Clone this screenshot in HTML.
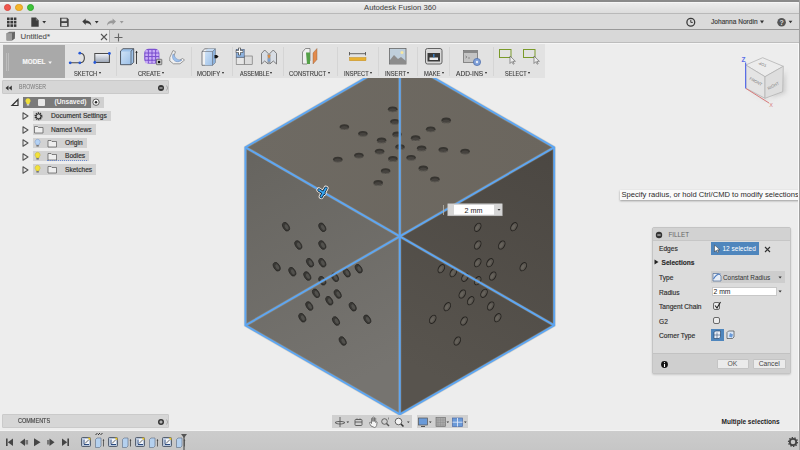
<!DOCTYPE html>
<html><head><meta charset="utf-8">
<style>
*{margin:0;padding:0;box-sizing:border-box}
html,body{width:800px;height:450px;overflow:hidden;background:#a0a0a0}
body{position:relative;font-family:"Liberation Sans",sans-serif;color:#333}
.a{position:absolute}
.t{position:absolute;white-space:nowrap;line-height:1}
#win{position:absolute;left:0;top:0;width:799px;height:450px;background:#ededed;overflow:hidden}
#title{left:0;top:1.5px;width:799px;height:11.5px;background:linear-gradient(#ececec,#dcdcdc);border-top:0.5px solid #f6f6f6;border-radius:3px 3px 0 0}
#topstrip{left:0;top:0;width:800px;height:2px;background:#8a8a8a}
#tb{left:0;top:13px;width:799px;height:17px;background:#dadada;border-top:1px solid #b9b9b9;border-bottom:1px solid #999}
#tabs{left:0;top:30px;width:799px;height:13px;background:#d8d8d8;border-bottom:1px solid #bdbdbd;box-shadow:0 1px 0 #f6f6f6}
#tab1{left:0;top:0;width:110px;height:12px;background:#ebebeb;border-right:1px solid #b0b0b0}
#ribbon{left:3px;top:44px;width:542px;height:34px;background:#e2e2e2}
#model{left:3px;top:45px;width:62px;height:33px;background:#a9a9a9}
.sep{position:absolute;top:47px;width:1px;height:29px;background:#d5d5d5}
.lbl{position:absolute;top:69.7px;font-size:6.4px;color:#3e3e3e;white-space:nowrap;line-height:8px;-webkit-text-stroke:0.12px #3e3e3e}
.lbl span{display:inline-block;transform-origin:0 0}
.dd{position:absolute;top:71.6px;width:0;height:0;border-left:1.6px solid transparent;border-right:1.6px solid transparent;border-top:2.4px solid #222}
.panel{position:absolute;left:2px;width:167px;height:14px;background:#d6d6d6;border:1px solid #cacaca;border-radius:1px}
.row{position:absolute;height:11px;background:#d2d2d2}
.rt{position:absolute;top:1.5px;font-size:6.6px;color:#2e2e2e;white-space:nowrap;line-height:8px;-webkit-text-stroke:0.15px #2e2e2e}
.tri{position:absolute;width:0;height:0;border-top:3px solid transparent;border-bottom:3px solid transparent;border-left:5px solid #444}
#timeline{left:0;top:431px;width:799px;height:19px;background:linear-gradient(#cccccc,#c6c6c6);box-shadow:0 -1px 0 #f3f3f3}
.navg{position:absolute;top:415px;height:13px;background:#d0d0d0}
#dlg{left:652px;top:227px;width:139px;height:147px;background:#dcdcdc;border:1px solid #c4c4c4;border-radius:2px;box-shadow:0 1px 2px rgba(0,0,0,.15)}
.dl{position:absolute;left:6px;font-size:6.6px;color:#2e2e2e;white-space:nowrap;line-height:8px;-webkit-text-stroke:0.15px #2e2e2e}
</style></head><body>
<div id="win">
  <div id="topstrip" class="a"></div>
  <div id="title" class="a">
    <div class="a" style="left:4px;top:1.7px;width:7.2px;height:7.2px;border-radius:50%;background:#f0564c;border:0.5px solid #d84840"></div>
    <div class="a" style="left:15.4px;top:1.7px;width:7.2px;height:7.2px;border-radius:50%;background:#f6b52a;border:0.5px solid #dc9e22"></div>
    <div class="a" style="left:26.6px;top:1.7px;width:7.2px;height:7.2px;border-radius:50%;background:#3ec43a;border:0.5px solid #30a82e"></div>
    <div class="t" style="left:364px;top:1.5px;font-size:7.7px;color:#3e3e3e">Autodesk Fusion 360</div>
  </div>
  <!-- cube -->
  <svg class="a" style="left:0;top:0" width="800" height="450" viewBox="0 0 800 450">
    <defs>
      <linearGradient id="fl" x1="0" y1="0" x2="0.3" y2="1"><stop offset="0" stop-color="#66645f"/><stop offset="1" stop-color="#767470"/></linearGradient>
      <linearGradient id="fr" x1="1" y1="0" x2="0.7" y2="1"><stop offset="0" stop-color="#4b4742"/><stop offset="1" stop-color="#58544e"/></linearGradient>
      <linearGradient id="ft" x1="0" y1="0" x2="1" y2="0"><stop offset="0" stop-color="#6e6a63"/><stop offset="1" stop-color="#6b665e"/></linearGradient>
      <g id="ht"><ellipse rx="4.8" ry="2.9" fill="#363430"/><ellipse cy="0.7" rx="3.4" ry="1.7" fill="#46433f"/><path d="M-4.4 0.9a4.8 2.9 0 0 0 8.8 0" fill="none" stroke="#7e7a72" stroke-width="0.5"/></g>
      <g id="hl"><ellipse rx="2.9" ry="4.7" fill="#3a3936" stroke="#262523" stroke-width="0.7"/><ellipse cx="0.4" cy="0.5" rx="1.6" ry="2.8" fill="#52514d"/></g>
      <g id="hr"><ellipse rx="2.8" ry="4.5" fill="#5a5650" stroke="#23211e" stroke-width="0.9"/><ellipse cx="-0.3" cy="0.5" rx="1.4" ry="2.6" fill="#66625b"/></g>
    </defs>
    <path d="M399.8 58.2L554.2 147.3 399.8 236.4 245.4 147.3z" fill="url(#ft)"/>
    <path d="M245.4 147.3L399.8 236.4 399.8 414.4 245.4 325.4z" fill="url(#fl)"/>
    <path d="M399.8 236.4L554.2 147.3 554.2 325.4 399.8 414.4z" fill="url(#fr)"/>
    <use href="#ht" x="392.7" y="109.3"/>
    <use href="#ht" x="394.9" y="121.8"/>
    <use href="#ht" x="397.1" y="134.4"/>
    <use href="#ht" x="400" y="147.1"/>
    <use href="#ht" x="344.4" y="127.1"/>
    <use href="#ht" x="362.9" y="133.8"/>
    <use href="#ht" x="381.6" y="140.4"/>
    <use href="#ht" x="337.8" y="159.6"/>
    <use href="#ht" x="358.9" y="155.6"/>
    <use href="#ht" x="379.6" y="151.6"/>
    <use href="#ht" x="392.9" y="158.9"/>
    <use href="#ht" x="385.6" y="171.1"/>
    <use href="#ht" x="378.2" y="182.9"/>
    <use href="#ht" x="411.1" y="157.8"/>
    <use href="#ht" x="423.3" y="168.4"/>
    <use href="#ht" x="434.9" y="179.3"/>
    <use href="#ht" x="421.6" y="148.4"/>
    <use href="#ht" x="443.3" y="149.8"/>
    <use href="#ht" x="465.1" y="151.6"/>
    <use href="#ht" x="415.6" y="138.2"/>
    <use href="#ht" x="430.7" y="129.3"/>
    <use href="#ht" x="446.2" y="120.4"/>
    <use href="#hl" transform="translate(286 226.7) rotate(-30)"/>
    <use href="#hl" transform="translate(322.3 227.3) rotate(-30)"/>
    <use href="#hl" transform="translate(298.3 245) rotate(-30)"/>
    <use href="#hl" transform="translate(322.3 245) rotate(-30)"/>
    <use href="#hl" transform="translate(276.7 266.7) rotate(-30)"/>
    <use href="#hl" transform="translate(292.3 271.7) rotate(-30)"/>
    <use href="#hl" transform="translate(310 262.7) rotate(-30)"/>
    <use href="#hl" transform="translate(322.3 262.7) rotate(-30)"/>
    <use href="#hl" transform="translate(307.3 276) rotate(-30)"/>
    <use href="#hl" transform="translate(322.3 280.7) rotate(-30)"/>
    <use href="#hl" transform="translate(335 277.3) rotate(-30)"/>
    <use href="#hl" transform="translate(346.7 272.7) rotate(-30)"/>
    <use href="#hl" transform="translate(358.7 268.7) rotate(-30)"/>
    <use href="#hl" transform="translate(316 293.3) rotate(-30)"/>
    <use href="#hl" transform="translate(337.7 294) rotate(-30)"/>
    <use href="#hl" transform="translate(329.3 300.7) rotate(-30)"/>
    <use href="#hl" transform="translate(309.3 306) rotate(-30)"/>
    <use href="#hl" transform="translate(352.7 306.7) rotate(-30)"/>
    <use href="#hl" transform="translate(302.3 317.7) rotate(-30)"/>
    <use href="#hl" transform="translate(336 321) rotate(-30)"/>
    <use href="#hl" transform="translate(367.3 319.3) rotate(-30)"/>
    <use href="#hl" transform="translate(342.7 341) rotate(-30)"/>
    <use href="#hr" transform="translate(514.0 226.7) rotate(30)"/>
    <use href="#hr" transform="translate(477.7 227.3) rotate(30)"/>
    <use href="#hr" transform="translate(501.7 245) rotate(30)"/>
    <use href="#hr" transform="translate(477.7 245) rotate(30)"/>
    <use href="#hr" transform="translate(523.3 266.7) rotate(30)"/>
    <use href="#hr" transform="translate(490.0 262.7) rotate(30)"/>
    <use href="#hr" transform="translate(477.7 262.7) rotate(30)"/>
    <use href="#hr" transform="translate(492.7 276) rotate(30)"/>
    <use href="#hr" transform="translate(477.7 280.7) rotate(30)"/>
    <use href="#hr" transform="translate(465.0 277.3) rotate(30)"/>
    <use href="#hr" transform="translate(453.3 272.7) rotate(30)"/>
    <use href="#hr" transform="translate(441.3 268.7) rotate(30)"/>
    <use href="#hr" transform="translate(484.0 293.3) rotate(30)"/>
    <use href="#hr" transform="translate(462.3 294) rotate(30)"/>
    <use href="#hr" transform="translate(470.7 300.7) rotate(30)"/>
    <use href="#hr" transform="translate(490.7 306) rotate(30)"/>
    <use href="#hr" transform="translate(447.3 306.7) rotate(30)"/>
    <use href="#hr" transform="translate(497.7 317.7) rotate(30)"/>
    <use href="#hr" transform="translate(464.0 321) rotate(30)"/>
    <use href="#hr" transform="translate(432.7 319.3) rotate(30)"/>
    <use href="#hr" transform="translate(457.3 341) rotate(30)"/>
    <g fill="none" stroke="#bba88a" stroke-width="3.2" stroke-opacity="0.35" stroke-linejoin="round">
      <path d="M399.8 58.2L554.2 147.3 554.2 325.4 399.8 414.4 245.4 325.4 245.4 147.3z M245.4 147.3L399.8 236.4 554.2 147.3 M399.8 236.4V414.4 M399.8 58.2V236.4 M245.4 325.4L399.8 236.4 554.2 325.4"/>
    </g>
    <g fill="none" stroke="#5ea6f2" stroke-width="2" stroke-linejoin="round">
      <path d="M399.8 58.2L554.2 147.3 554.2 325.4 399.8 414.4 245.4 325.4 245.4 147.3z M245.4 147.3L399.8 236.4 554.2 147.3 M399.8 236.4V414.4 M399.8 58.2V236.4 M245.4 325.4L399.8 236.4 554.2 325.4"/>
    </g>
    <g fill="none" stroke-linecap="round" stroke-linejoin="round">
      <path d="M319 190L324 193.3M326 188.2L321.2 196.6" stroke="#fbf6ee" stroke-width="5"/>
      <path d="M319 190L324 193.3M326 188.2L321.2 196.6" stroke="#0d2238" stroke-width="3.4"/>
      <path d="M319 190L324 193.3M326 188.2L321.2 196.6" stroke="#3aa6f0" stroke-width="1.8"/>
    </g>
    <rect x="447.8" y="203.8" width="54.4" height="12" fill="#d6d6d6" stroke="#c0c0c0" stroke-width="0.5"/>
    <rect x="454" y="205" width="40" height="9.6" fill="#ffffff"/>
    <path d="M497.5 209h3l-1.5 1.8z" fill="#333"/>
    <path d="M443.5 205v10" stroke="#b8b4ac" stroke-width="0.8"/>
    <text x="473.5" y="212.6" font-size="7.2" fill="#222" text-anchor="middle" font-family="Liberation Sans">2 mm</text>
  </svg>
  <div id="tb" class="a">
    <svg class="a" style="left:0;top:-1px" width="130" height="16" viewBox="0 -1 130 16">
      <!-- grid icon -->
      <g fill="#3a3a3a">
        <rect x="7" y="3.5" width="2.6" height="2.6"/><rect x="10.4" y="3.5" width="2.6" height="2.6"/><rect x="13.8" y="3.5" width="2.6" height="2.6"/>
        <rect x="7" y="6.9" width="2.6" height="2.6"/><rect x="10.4" y="6.9" width="2.6" height="2.6"/><rect x="13.8" y="6.9" width="2.6" height="2.6"/>
        <rect x="7" y="10.3" width="2.6" height="2.6"/><rect x="10.4" y="10.3" width="2.6" height="2.6"/><rect x="13.8" y="10.3" width="2.6" height="2.6"/>
      </g>
      <!-- file -->
      <path d="M31.3 3.6h4.6l2.8 2.8v6.4h-7.4z" fill="#3e3e3e"/>
      <path d="M35.9 3.6v2.8h2.8" fill="#777"/>
      <path d="M42.3 7h3.8l-1.9 2.6z" fill="#333"/>
      <!-- save -->
      <path d="M60 3.8h7.2l1.5 1.5v7.5h-8.7z" fill="#444"/>
      <rect x="61.5" y="4.6" width="5.2" height="2.6" fill="#d8d8d8"/>
      <rect x="61.5" y="9" width="5.6" height="3" fill="#d8d8d8"/>
      <!-- undo -->
      <path d="M82.3 7.6l3.4-3v1.9c3.2 0 5.4 1.4 5.6 5.3-1-2-2.6-2.6-5.6-2.6v1.9z" fill="#3a3a3a"/>
      <path d="M94.8 7h3.8l-1.9 2.6z" fill="#333"/>
      <!-- redo -->
      <path d="M116 7.6l-3.4-3v1.9c-3.2 0-5.4 1.4-5.6 5.3 1-2 2.6-2.6 5.6-2.6v1.9z" fill="#9a9a9a"/>
      <path d="M119.8 7h3.8l-1.9 2.6z" fill="#999"/>
    </svg>
    <svg class="a" style="left:680px;top:-1px" width="119" height="16" viewBox="0 -1 119 16">
      <circle cx="10.8" cy="8.2" r="3.9" fill="none" stroke="#3a3a3a" stroke-width="1.3"/>
      <path d="M10.8 5.8v2.6h2" fill="none" stroke="#3a3a3a" stroke-width="1"/>
      <path d="M80 6.6h4l-2 2.8z" fill="#333"/>
      <circle cx="101.6" cy="8.2" r="4.3" fill="#555"/>
      <text x="101.6" y="10.9" font-size="7" font-weight="bold" fill="#ddd" text-anchor="middle" font-family="Liberation Sans">?</text>
      <path d="M108.6 6.7h3.8l-1.9 2.6z" fill="#333"/>
    </svg>
    <div class="t" style="left:711px;top:4.5px;font-size:6.6px;color:#3a3a3a;-webkit-text-stroke:0.15px #3a3a3a">Johanna Nordin</div>
  </div>
  <div id="tabs" class="a">
    <div id="tab1" class="a">
      <svg class="a" style="left:5px;top:1px" width="12" height="11" viewBox="0 0 12 11">
        <path d="M1.5 2.2l3-1.5h5.5l-.3 6.8-3 1.9h-5.2z" fill="#777"/>
        <path d="M1.5 2.2h5.5v7.2h-5.2z" fill="#9c9c9c"/>
        <path d="M7 2.2l3-1.5-.3 6.8-2.7 1.9z" fill="#666"/>
      </svg>
      <div class="t" style="left:20.5px;top:3px;font-size:7.8px;color:#505050;-webkit-text-stroke:0.1px #505050">Untitled*</div>
      <svg class="a" style="left:100px;top:2.5px" width="8" height="8" viewBox="0 0 8 8"><path d="M1 1l6 6M7 1l-6 6" stroke="#555" stroke-width="1.1"/></svg>
    </div>
    <svg class="a" style="left:114px;top:2.5px" width="9" height="9" viewBox="0 0 9 9"><path d="M4.5 0.5v8M0.5 4.5h8" stroke="#666" stroke-width="1.1"/></svg>
  </div>
  <div id="ribbon" class="a"></div>
  <div id="model" class="a">
    <div class="a" style="left:3px;top:8px;width:1px;height:18px;background:#bdbdbd"></div>
    <div class="a" style="left:5px;top:8px;width:1px;height:18px;background:#bdbdbd"></div>
    <div class="t" style="left:19.5px;top:14px;font-size:6.3px;font-weight:bold;color:#f6f6f6;-webkit-text-stroke:0.2px #f6f6f6">MODEL</div>
    <svg class="a" style="left:44.5px;top:15.8px" width="5" height="4"><path d="M0.3 0.5h3.6l-1.8 2.4z" fill="#f6f6f6"/></svg>
  </div>
  <div class="sep" style="left:115.5px"></div>
  <div class="sep" style="left:190.5px"></div>
  <div class="sep" style="left:231.5px"></div>
  <div class="sep" style="left:282.5px"></div>
  <div class="sep" style="left:337px"></div>
  <div class="sep" style="left:378px"></div>
  <div class="sep" style="left:417px"></div>
  <div class="sep" style="left:449px"></div>
  <div class="sep" style="left:493px"></div>
  <div class="lbl" style="left:74.25px"><span style="transform:scaleX(0.897)">SKETCH</span></div><i class="dd" style="left:99.1px"></i>
  <div class="lbl" style="left:137.5px"><span style="transform:scaleX(0.884)">CREATE</span></div><i class="dd" style="left:161.6px"></i>
  <div class="lbl" style="left:196.7px"><span style="transform:scaleX(0.934)">MODIFY</span></div><i class="dd" style="left:221.5px"></i>
  <div class="lbl" style="left:239.5px"><span style="transform:scaleX(0.850)">ASSEMBLE</span></div><i class="dd" style="left:270.4px"></i>
  <div class="lbl" style="left:289px"><span style="transform:scaleX(0.927)">CONSTRUCT</span></div><i class="dd" style="left:327.8px"></i>
  <div class="lbl" style="left:343.7px"><span style="transform:scaleX(0.888)">INSPECT</span></div><i class="dd" style="left:369.9px"></i>
  <div class="lbl" style="left:384.7px"><span style="transform:scaleX(0.901)">INSERT</span></div><i class="dd" style="left:407.3px"></i>
  <div class="lbl" style="left:423.5px"><span style="transform:scaleX(0.906)">MAKE</span></div><i class="dd" style="left:441.5px"></i>
  <div class="lbl" style="left:456.2px"><span style="transform:scaleX(1.028)">ADD-INS</span></div><i class="dd" style="left:484.8px"></i>
  <div class="lbl" style="left:504.8px"><span style="transform:scaleX(0.873)">SELECT</span></div><i class="dd" style="left:528.1px"></i>
  <svg class="a" style="left:0;top:40px" width="560" height="30" viewBox="0 40 560 30">
    <defs>
      <linearGradient id="gb" x1="0" y1="0" x2="1" y2="1"><stop offset="0" stop-color="#d8e8f8"/><stop offset="1" stop-color="#6f9fd0"/></linearGradient>
      <linearGradient id="gr" x1="0" y1="0" x2="0" y2="1"><stop offset="0" stop-color="#f2f4f8"/><stop offset="1" stop-color="#9aa4b4"/></linearGradient>
      <linearGradient id="gp" x1="0" y1="0" x2="1" y2="1"><stop offset="0" stop-color="#b48ef0"/><stop offset="1" stop-color="#7048c8"/></linearGradient>
      <linearGradient id="gb2" x1="0" y1="0" x2="1" y2="1"><stop offset="0" stop-color="#cfe2f6"/><stop offset="1" stop-color="#9cc0e8"/></linearGradient>
    </defs>
    <!-- sketch arc -->
    <path d="M70.2 62.8H79.8M79.8 53.2c3.2 0 4.6 2.2 4.6 4.8s-1.6 4.8-4.6 4.8" fill="none" stroke="#4a4a4a" stroke-width="1.1"/>
    <circle cx="70.2" cy="62.8" r="1.4" fill="#2558d8"/><circle cx="79.8" cy="62.8" r="1.4" fill="#2558d8"/><circle cx="79.8" cy="53.2" r="1.4" fill="#2558d8"/>
    <!-- sketch rect -->
    <rect x="94.8" y="53.5" width="14.6" height="9" fill="url(#gr)" stroke="#4a4a4a" stroke-width="1"/>
    <circle cx="109.4" cy="53.5" r="1.4" fill="#2558d8"/><circle cx="94.8" cy="62.5" r="1.4" fill="#2558d8"/>
    <!-- create extrude -->
    <path d="M120.5 51l2.5-2.3h10.7v13.5l-2.5 2.5h-10.7z" fill="#9ec2ea" stroke="#3a3f48" stroke-width="0.8" stroke-linejoin="round"/>
    <path d="M121.3 51.6h9.6v12.3h-9.6z" fill="url(#gb2)"/>
    <path d="M131 51l2.7-2.3M131 51v13.5" stroke="#3a3f48" stroke-width="0.6" fill="none"/>
    <path d="M136.5 64V51.5" stroke="#333" stroke-width="0.9"/><path d="M135.3 52.8l1.2-2 1.2 2z" fill="#222"/>
    <!-- sphere grid -->
    <rect x="144.2" y="48.7" width="15.2" height="15" rx="4.6" fill="#7d52d0"/>
    <g fill="#c9acf6"><rect x="145.3" y="49.9" width="2.6" height="2.6" rx="0.6"/><rect x="148.9" y="49.9" width="2.6" height="2.6" rx="0.6"/><rect x="152.5" y="49.9" width="2.6" height="2.6" rx="0.6"/><rect x="156.1" y="49.9" width="2.6" height="2.6" rx="0.6"/><rect x="145.3" y="53.5" width="2.6" height="2.6" rx="0.6"/><rect x="148.9" y="53.5" width="2.6" height="2.6" rx="0.6"/><rect x="152.5" y="53.5" width="2.6" height="2.6" rx="0.6"/><rect x="156.1" y="53.5" width="2.6" height="2.6" rx="0.6"/><rect x="145.3" y="57.1" width="2.6" height="2.6" rx="0.6"/><rect x="148.9" y="57.1" width="2.6" height="2.6" rx="0.6"/><rect x="152.5" y="57.1" width="2.6" height="2.6" rx="0.6"/><rect x="156.1" y="57.1" width="2.6" height="2.6" rx="0.6"/><rect x="145.3" y="60.7" width="2.6" height="2.6" rx="0.6"/><rect x="148.9" y="60.7" width="2.6" height="2.6" rx="0.6"/><rect x="152.5" y="60.7" width="2.6" height="2.6" rx="0.6"/><rect x="156.1" y="60.7" width="2.6" height="2.6" rx="0.6"/></g>
    <rect x="156.4" y="59.3" width="5.4" height="5.4" rx="0.5" fill="#c8c8c8" stroke="#555" stroke-width="0.7"/>
    <circle cx="159.1" cy="62" r="1.3" fill="#111"/>
    <!-- revolve -->
    <path d="M169.8 57.5l3.2-7 2.5 1.2-1.8 4.6c-.3 2.8 1.8 4.8 4.5 4.8l4.3-2.6 2 1.5-4.5 3.8h-6.5l-3.7-2.8z" fill="#f0f0f0" stroke="#777" stroke-width="0.7" stroke-linejoin="round"/>
    <path d="M173.2 53.8c-1.5 3 -.5 6.5 2.5 7.6 2.2.8 4.6.2 6.2-1.4-2.8.3-5.5-.6-6.8-2.8-.8-1.2-1.2-2.5-1.9-3.4z" fill="#9cc0ec" stroke="#5a7ab0" stroke-width="0.4"/>
    <!-- modify -->
    <path d="M202 51.5l2.8-2.7h10.5v13.8l-2.8 2.7h-10.5z" fill="#f2f2f2" stroke="#4a4f58" stroke-width="0.7" stroke-linejoin="round"/>
    <path d="M205 51.5h7.5v13.8h-7.5z" fill="url(#gb2)"/>
    <path d="M205 51.5l2.8-2.7h7.5l-2.8 2.7z" fill="#c4daf2"/>
    <path d="M212.5 51.5l2.8-2.7v13.8l-2.8 2.7z" fill="#8cb2dc"/>
    <path d="M202 51.5h10.5v13.8M212.5 51.5l2.8-2.7" stroke="#4a4f58" stroke-width="0.5" fill="none"/>
    <path d="M214.5 55h2.3l1.8 1.6-1.8 1.6h-2.3z" fill="#151515"/>
    <!-- assemble 1 -->
    <rect x="244.2" y="56" width="8" height="8.5" fill="#dcdcdc" stroke="#666" stroke-width="0.6"/>
    <rect x="236.2" y="57.2" width="8" height="7.3" fill="#e6e6e6" stroke="#666" stroke-width="0.6"/>
    <rect x="236.2" y="49.5" width="8" height="7.7" fill="#8fb4e0" stroke="#4a5a78" stroke-width="0.6"/>
    <path d="M239.5 47.8v7.4M235.8 51.5h7.4" stroke="#3a3a3a" stroke-width="2.6"/>
    <path d="M239.5 48.3v6.4M236.3 51.5h6.4" stroke="#fff" stroke-width="1.3"/>
    <!-- assemble 2 -->
    <path d="M261.5 64v-10.5l3.2-3.5 3.5 3.5v10.5l-3.5-3z" fill="#d8dde4" stroke="#555" stroke-width="0.7" stroke-linejoin="round"/>
    <path d="M276.5 64v-10.5l-3.2-3.5-3.5 3.5v10.5l3.5-3z" fill="#d8dde4" stroke="#555" stroke-width="0.7" stroke-linejoin="round"/>
    <path d="M268 55l1 2.5 1-2.5" stroke="#e08a3a" stroke-width="1.1" fill="none"/>
    <path d="M267.8 58.5h2.4v3h-2.4z" fill="#7aa0d0"/>
    <!-- construct -->
    <path d="M302.5 52l3-3.5h4.5v12l-3 3.5h-4.5z" fill="#f0f0f0" stroke="#666" stroke-width="0.7"/>
    <path d="M306 52.5h4v11.5h-3z" fill="#55a048"/>
    <path d="M313 53l4-4.5v11l-4 4.5z" fill="#e28a4c" stroke="#8a5a3a" stroke-width="0.4"/>
    <!-- inspect -->
    <path d="M349.5 53.7h16M349.5 52v3.4M365.5 52v3.4" stroke="#444" stroke-width="0.8"/>
    <rect x="349.5" y="57.5" width="16.5" height="3.2" fill="#e8b030" stroke="#b88010" stroke-width="0.4"/>
    <!-- insert -->
    <rect x="389.5" y="48.5" width="16.5" height="15.5" fill="#bfcfdc" stroke="#666" stroke-width="0.8"/>
    <path d="M390 64v-4l4-5 4 4 3-2 5 4v3z" fill="#8c8c8c"/>
    <circle cx="402" cy="52.5" r="1.5" fill="#f8e8a0"/>
    <!-- make -->
    <rect x="425.5" y="48.5" width="16.5" height="15.5" rx="2" fill="#d8d8d8" stroke="#555" stroke-width="0.9"/>
    <rect x="427.5" y="53" width="12.5" height="8.5" fill="#3a3a3a"/>
    <rect x="429.5" y="57.5" width="8.5" height="2.5" fill="#eee"/>
    <path d="M433.8 54v3.5" stroke="#3a8ad8" stroke-width="1.3"/>
    <!-- add-ins -->
    <rect x="463.5" y="50.5" width="14" height="12" fill="#c4c4c4" stroke="#666" stroke-width="0.7"/>
    <rect x="463.5" y="50.5" width="14" height="2.5" fill="#888"/>
    <path d="M465.5 56l1.5 1-1.5 1M468 58h2" stroke="#555" stroke-width="0.5" fill="none"/>
    <circle cx="477" cy="62" r="3.6" fill="#7fa0d8" stroke="#4a6aa8" stroke-width="0.7"/>
    <circle cx="477" cy="62" r="1.2" fill="#e8eef8"/>
    <!-- select -->
    <rect x="499.5" y="49.5" width="11.5" height="8" fill="none" stroke="#7a9a2a" stroke-width="1"/>
    <path d="M510 56v7.5l1.8-1.8 1.4 2.5 1-.5-1.3-2.4h2.5z" fill="#eee" stroke="#555" stroke-width="0.6"/>
    <rect x="523.5" y="49.5" width="11.5" height="8" fill="none" stroke="#7a9a2a" stroke-width="1"/>
    <path d="M534 56v7.5l1.8-1.8 1.4 2.5 1-.5-1.3-2.4h2.5z" fill="#eee" stroke="#555" stroke-width="0.6"/>
  </svg>
  <!-- browser -->
  <div class="panel" style="top:80px">
    <svg class="a" style="left:2px;top:4px" width="8" height="6"><path d="M0.5 3l3-2.5v5zM3.8 3l3-2.5v5z" fill="#333"/></svg>
    <div class="t" style="left:15.5px;top:3.2px;font-size:6.9px;color:#777;transform:scaleX(0.76);transform-origin:0 0">BROWSER</div>
    <svg class="a" style="left:154px;top:3px" width="12" height="8"><circle cx="4" cy="4" r="3" fill="#333"/><path d="M2.4 4h3.2" stroke="#ddd" stroke-width="1"/><path d="M9.5 1.5l1.2 2.5-1.2 2.5" stroke="#999" stroke-width="0.7" fill="none"/></svg>
  </div>
  <!-- tree -->
  <svg class="a" style="left:10px;top:97px" width="10" height="10"><path d="M2 8.5l6-6v6z" fill="none" stroke="#333" stroke-width="1.2"/></svg>
  <div class="row" style="left:23px;top:97px;width:68px;height:10.5px;background:#7a7a7a"></div>
  <div class="row" style="left:91px;top:97px;width:13px;height:10.5px;background:#d0d0d0"></div>
  <svg class="a" style="left:23px;top:97px" width="82" height="11">
    <path d="M5 1.3a2.6 2.6 0 0 1 1.5 4.7v1h-3v-1a2.6 2.6 0 0 1 1.5-4.7z" fill="#f2e13a"/><rect x="3.8" y="7" width="2.4" height="1.6" fill="#ccc"/>
    <rect x="15" y="2" width="7" height="7" rx="1" fill="#e8e8e8"/>
    <circle cx="73" cy="5.2" r="3.2" fill="#f4f4f4" stroke="#444" stroke-width="0.8"/><circle cx="73" cy="5.2" r="1.2" fill="#222"/>
  </svg>
  <div class="t" style="left:54.5px;top:98.5px;font-size:6.6px;font-weight:bold;color:#f2f2f2">(Unsaved)</div>

  <svg class="a" style="left:21.5px;top:112px" width="8" height="8"><path d="M1 0.8l5 3.2-5 3.2z" fill="none" stroke="#555" stroke-width="1.1" stroke-linejoin="round"/></svg>
  <div class="row" style="left:32.5px;top:110.5px;width:78.5px;height:10.5px"></div>
  <svg class="a" style="left:33px;top:110.5px" width="12" height="11" viewBox="0 0 12 11"><circle cx="5.5" cy="5.3" r="3.2" fill="none" stroke="#333" stroke-width="1.6" stroke-dasharray="1.2 0.8"/><circle cx="5.5" cy="5.3" r="2.4" fill="none" stroke="#333" stroke-width="1"/></svg>
  <div class="rt" style="left:51px;top:112px">Document Settings</div>

  <svg class="a" style="left:21.5px;top:125.5px" width="8" height="8"><path d="M1 0.8l5 3.2-5 3.2z" fill="none" stroke="#555" stroke-width="1.1" stroke-linejoin="round"/></svg>
  <div class="row" style="left:32.5px;top:124px;width:63px;height:10.5px"></div>
  <svg class="a" style="left:33px;top:124px" width="12" height="11"><path d="M1.5 2.5h3l1 1h4.5v5.5h-8.5z" fill="#eee" stroke="#555" stroke-width="0.7"/></svg>
  <div class="rt" style="left:51px;top:125.5px">Named Views</div>

  <svg class="a" style="left:21.5px;top:139px" width="8" height="8"><path d="M1 0.8l5 3.2-5 3.2z" fill="none" stroke="#555" stroke-width="1.1" stroke-linejoin="round"/></svg>
  <div class="row" style="left:32.5px;top:137.5px;width:54.5px;height:10.5px"></div>
  <svg class="a" style="left:33px;top:137.5px" width="26" height="11"><path d="M4.6 1.3a2.6 2.6 0 0 1 1.5 4.7v1h-3v-1a2.6 2.6 0 0 1 1.5-4.7z" fill="#b4d2f4" stroke="#6a8cc0" stroke-width="0.4"/><rect x="3.4" y="7" width="2.4" height="1.6" fill="#777"/><path d="M15 2.5h3l1 1h4.5v5.5h-8.5z" fill="#eee" stroke="#555" stroke-width="0.7"/></svg>
  <div class="rt" style="left:65px;top:139px">Origin</div>

  <svg class="a" style="left:21.5px;top:152.5px" width="8" height="8"><path d="M1 0.8l5 3.2-5 3.2z" fill="none" stroke="#555" stroke-width="1.1" stroke-linejoin="round"/></svg>
  <div class="row" style="left:32.5px;top:150.5px;width:56.5px;height:10.5px"></div>
  <svg class="a" style="left:33px;top:150.5px" width="26" height="11"><path d="M4.6 1.3a2.6 2.6 0 0 1 1.5 4.7v1h-3v-1a2.6 2.6 0 0 1 1.5-4.7z" fill="#f2e13a" stroke="#b8a830" stroke-width="0.4"/><rect x="3.4" y="7" width="2.4" height="1.6" fill="#777"/><path d="M15 2.5h3l1 1h4.5v5.5h-8.5z" fill="#eee" stroke="#555" stroke-width="0.7"/></svg>
  <div class="rt" style="left:65px;top:152px">Bodies</div>
  <div class="a" style="left:47px;top:159.5px;width:40px;height:1px;border-top:1px dotted #6a8ad0"></div>

  <svg class="a" style="left:21.5px;top:166px" width="8" height="8"><path d="M1 0.8l5 3.2-5 3.2z" fill="none" stroke="#555" stroke-width="1.1" stroke-linejoin="round"/></svg>
  <div class="row" style="left:32.5px;top:164px;width:63.5px;height:10.5px"></div>
  <svg class="a" style="left:33px;top:164px" width="26" height="11"><path d="M4.6 1.3a2.6 2.6 0 0 1 1.5 4.7v1h-3v-1a2.6 2.6 0 0 1 1.5-4.7z" fill="#f2e13a" stroke="#b8a830" stroke-width="0.4"/><rect x="3.4" y="7" width="2.4" height="1.6" fill="#777"/><path d="M15 2.5h3l1 1h4.5v5.5h-8.5z" fill="#eee" stroke="#555" stroke-width="0.7"/></svg>
  <div class="rt" style="left:65px;top:165.5px">Sketches</div>

  <!-- comments -->
  <div class="panel" style="top:414px">
    <div class="t" style="left:15px;top:3.2px;font-size:6.9px;color:#444;-webkit-text-stroke:0.15px #444;transform:scaleX(0.8);transform-origin:0 0">COMMENTS</div>
    <svg class="a" style="left:154px;top:3px" width="12" height="8"><circle cx="4" cy="4" r="3" fill="#333"/><path d="M2.4 4h3.2M4 2.4v3.2" stroke="#ddd" stroke-width="1"/><path d="M9.5 1.5l1.2 2.5-1.2 2.5" stroke="#999" stroke-width="0.7" fill="none"/></svg>
  </div>
  <!-- timeline -->
  <div id="timeline" class="a">
    <svg class="a" style="left:0;top:-1px" width="200" height="20" viewBox="0 430 200 20">
      <g fill="#454545">
        <rect x="6" y="438.5" width="1.6" height="7.5"/><path d="M13 438.5v7.5l-5.2-3.75z"/>
        <path d="M20 442.25l5-3.75v7.5z"/><rect x="25.5" y="440" width="2.6" height="4.5" fill="#777"/>
        <path d="M34 438.3v7.9l6.5-3.95z"/>
        <rect x="47" y="440" width="2.6" height="4.5" fill="#777"/><path d="M49.5 438.5v7.5l5 -3.75z"/>
        <path d="M62 438.5v7.5l5.2-3.75z"/><rect x="67.4" y="438.5" width="1.6" height="7.5"/>
      </g>
      <g id="tl">
        <rect x="81.5" y="437.5" width="9" height="9" rx="1" fill="#b8c6da" stroke="#3c4658" stroke-width="0.8"/>
        <rect x="83" y="439" width="6" height="6" fill="#f2f5fa"/>
        <path d="M84 439.5v5h5" stroke="#2a4a80" stroke-width="1" fill="none"/><path d="M85 443.5l4-4" stroke="#444" stroke-width="0.8"/><path d="M87.5 437.8l2.8 0 0 2.8z" fill="#f2c820"/>
        <path d="M95.5 439.5l1.5-1.5h4v8l-1.5 1.5h-4z" fill="#b4d0ee" stroke="#5a6a80" stroke-width="0.6"/>
        <path d="M103.5 446.5v-6.5" stroke="#333" stroke-width="0.7"/><path d="M102.6 440.5l0.9-1.6 0.9 1.6z" fill="#333"/>
      </g>
      <use href="#tl" x="27"/><use href="#tl" x="54"/><use href="#tl" x="81"/>
      <path d="M95.5 435l2-2M98 435l2-2M100.5 435l2-2" stroke="#222" stroke-width="0.9"/>
      <path d="M181 434h6l-3 4z" fill="#555"/><rect x="183.4" y="436" width="1.2" height="14" fill="#555"/>
    </svg>
    <svg class="a" style="left:787px;top:5px" width="12" height="12" viewBox="0 0 12 12">
      <circle cx="6" cy="6" r="3.2" fill="none" stroke="#444" stroke-width="1.8"/>
      <circle cx="6" cy="6" r="4.4" fill="none" stroke="#444" stroke-width="1.4" stroke-dasharray="1.4 1.3"/>
    </svg>
  </div>
  <div class="t" style="left:721.5px;top:419px;font-size:6.5px;font-weight:bold;color:#222">Multiple selections</div>
  <!-- nav bar -->
  <div class="navg" style="left:332px;width:80px"></div>
  <div class="navg" style="left:416.5px;width:51.5px"></div>
  <svg class="a" style="left:330px;top:415px" width="140" height="14" viewBox="330 414 140 14">
    <g fill="none" stroke="#555" stroke-width="0.9">
      <path d="M340 416v10M335 421.5c2-1.5 8-1.5 10 0M335 421.5c2 2 8 2 10 0"/>
      <rect x="355" y="418.5" width="7" height="6" rx="0.8"/><path d="M355 421h7M357 417.5v1M360 417.5v1"/>
      <path d="M371 425c-1-2-2-3-1-4 1 0 1 1 1.5 1.5v-5c.4-.8 1-.8 1.4 0v3-4c.4-.8 1-.8 1.4 0v4-3c.4-.8 1-.8 1.4 0v4c.6-1 1.4-1 1.4 0l-.5 3c-.5 1-1 2-2 2z" fill="#f4f4f4" stroke-width="0.7"/>
      <circle cx="384.5" cy="420.5" r="2.8"/><path d="M386.5 422.5l2.5 2.5" stroke-width="1.4"/><path d="M388.5 416.5v2" stroke-width="0.6"/>
      <circle cx="398.5" cy="420.5" r="3.3" fill="#f4f4f4"/><path d="M401 423l2.5 2.5" stroke-width="1.5" stroke="#333"/>
    </g>
    <g fill="#333">
      <path d="M346.5 420.5h2.6l-1.3 1.6z"/><path d="M407 420.5h2.6l-1.3 1.6z"/>
      <path d="M429 420.5h2.6l-1.3 1.6z"/><path d="M446.5 420.5h2.6l-1.3 1.6z"/><path d="M464 420.5h2.6l-1.3 1.6z"/>
    </g>
    <rect x="418.5" y="417" width="9" height="7" fill="#6a9ad8" stroke="#555" stroke-width="0.7"/><path d="M421 425.5h4" stroke="#555"/>
    <rect x="436" y="416.5" width="9.5" height="9" fill="#aaa" stroke="#666" stroke-width="0.6"/>
    <path d="M438 416.5v9M440.5 416.5v9M443 416.5v9M436 419h9.5M436 421.5h9.5M436 424h9.5" stroke="#888" stroke-width="0.4"/>
    <rect x="452.5" y="417" width="10" height="8.5" fill="#6a9ad8" stroke="#4a6aa8" stroke-width="0.7"/>
    <path d="M457.5 417v8.5M452.5 421.2h10" stroke="#e0e8f8" stroke-width="0.9"/>
  </svg>
  <!-- view cube -->
  <svg class="a" style="left:730px;top:50px" width="69" height="60" viewBox="730 50 69 60">
    <defs><filter id="vcb" x="-50%" y="-50%" width="200%" height="200%"><feGaussianBlur stdDeviation="2"/></filter></defs>
    <path d="M748 90L766 100 786 93 786 70 770 99z" fill="#bbb" opacity="0.6" filter="url(#vcb)"/>
    <path d="M745.7 65L762.7 57.7 783.3 66.3 765 76.7z" fill="#ececec" stroke="#b4b4b4" stroke-width="0.8" stroke-linejoin="round"/>
    <path d="M745.7 65L765 76.7 765 98.3 746 88.3z" fill="#e4e4e4" stroke="#b4b4b4" stroke-width="0.8" stroke-linejoin="round"/>
    <path d="M765 76.7L783.3 66.3 782.7 91.7 765 98.3z" fill="#dedede" stroke="#b4b4b4" stroke-width="0.8" stroke-linejoin="round"/>
    <path d="M745.6 62.5v26" stroke="#5a6ee8" stroke-width="1.2"/>
    <path d="M746 88.5L769 103" stroke="#d87a7a" stroke-width="1"/>
    <text x="743.5" y="62" font-size="6.5" font-weight="bold" fill="#5a6ee8" text-anchor="middle" font-family="Liberation Sans">Z</text>
    <text x="771" y="107" font-size="5.5" fill="#d87a7a" text-anchor="middle" font-family="Liberation Sans">X</text>
    <text font-size="4" fill="#777" font-family="Liberation Sans" transform="translate(767 64.5) rotate(200)">TOP</text>
    <text font-size="4" fill="#777" font-family="Liberation Sans" transform="translate(749 79.5) rotate(28)">FRONT</text>
    <text font-size="4" fill="#777" font-family="Liberation Sans" transform="translate(768.5 90) rotate(-28)">RIGHT</text>
  </svg>
  <!-- tooltip -->
  <div class="a" style="left:620px;top:190px;width:180px;height:9.5px;background:#fafafa;box-shadow:0 0.5px 2px rgba(0,0,0,.35)"></div>
  <div class="t" style="left:621.5px;top:190.8px;font-size:7.6px;color:#2a2a2a">Specify radius, or hold Ctrl/CMD to modify selections</div>
  <!-- fillet dialog -->
  <div id="dlg" class="a">
    <div class="a" style="left:0;top:0;width:137px;height:13px;background:#d2d2d2;border-bottom:1px solid #c6c6c6"></div>
    <svg class="a" style="left:2px;top:2.5px" width="8" height="8"><circle cx="4" cy="4" r="3.2" fill="#333"/><path d="M2.3 4h3.4" stroke="#ddd" stroke-width="1"/></svg>
    <div class="t" style="left:15.5px;top:3.5px;font-size:6.3px;color:#666">FILLET</div>
    <div class="dl" style="top:17px">Edges</div>
    <div class="a" style="left:57.5px;top:14px;width:48.5px;height:13px;background:#4f86bd"></div>
    <svg class="a" style="left:60px;top:15.5px" width="8" height="10"><path d="M1.5 1v7l1.8-1.8 1.3 2.5 1-.5-1.2-2.4h2.5z" fill="#fff" stroke="#333" stroke-width="0.5"/></svg>
    <div class="t" style="left:69.5px;top:18px;font-size:6.5px;color:#fff">12 selected</div>
    <svg class="a" style="left:111px;top:17.5px" width="7" height="7"><path d="M1 1l5 5M6 1l-5 5" stroke="#333" stroke-width="1.1"/></svg>
    <svg class="a" style="left:1px;top:31px" width="5" height="6"><path d="M0.5 0.5l4 2.5-4 2.5z" fill="#222"/></svg>
    <div class="dl" style="left:8.5px;top:30.5px;font-weight:bold;color:#2a2a2a">Selections</div>
    <div class="dl" style="top:46px">Type</div>
    <div class="a" style="left:57.5px;top:42.5px;width:74px;height:12.5px;background:#cdcdcd"></div>
    <svg class="a" style="left:59px;top:44px" width="10" height="10"><path d="M1 1.5h5.5l2.5 2.5v5h-8z" fill="#e8eef6" stroke="#4a6a98" stroke-width="0.7"/><path d="M1.5 7c2-4 4-5 7-5" fill="none" stroke="#4a7ac0" stroke-width="1.1"/></svg>
    <div class="t" style="left:70px;top:46.5px;font-size:6.4px;color:#333">Constant Radius</div>
    <svg class="a" style="left:125px;top:47.5px" width="5" height="4"><path d="M0.5 0.5h3.2l-1.6 2z" fill="#333"/></svg>
    <div class="dl" style="top:60.5px">Radius</div>
    <div class="a" style="left:59px;top:59px;width:64.5px;height:9px;background:#fff;border:0.5px solid #c8c8c8"></div>
    <div class="t" style="left:60.5px;top:60.5px;font-size:6.8px;color:#222">2 mm</div>
    <svg class="a" style="left:125px;top:61.5px" width="5" height="4"><path d="M0.5 0.5h3.2l-1.6 2z" fill="#333"/></svg>
    <div class="dl" style="top:75px">Tangent Chain</div>
    <div class="a" style="left:59.5px;top:74px;width:7.5px;height:7.5px;background:#ececec;border:0.7px solid #6a6a6a;border-radius:2px"></div>
    <svg class="a" style="left:59.5px;top:73px" width="9" height="9"><path d="M2 4.5l2 2.5 3.5-6" fill="none" stroke="#222" stroke-width="1.1"/></svg>
    <div class="dl" style="top:89.5px">G2</div>
    <div class="a" style="left:59.5px;top:88.5px;width:7.5px;height:7.5px;background:#ececec;border:0.7px solid #6a6a6a;border-radius:2px"></div>
    <div class="dl" style="top:103.5px">Corner Type</div>
    <div class="a" style="left:58px;top:100.5px;width:12.5px;height:12.5px;background:#4f86bd"></div>
    <svg class="a" style="left:58px;top:100.8px" width="30" height="12">
      <path d="M3 3.5l1.5-1.5h5v6l-1.5 1.5h-5z" fill="#e8eef8" stroke="#1e3a60" stroke-width="0.6"/>
      <path d="M3 6h6.5M6 3.5v6" stroke="#1e3a60" stroke-width="0.5"/>
      <path d="M16 3.5l1.5-1.5h5.5v6l-1.5 1.5h-5.5z" fill="#d8e6f6" stroke="#333" stroke-width="0.6"/>
      <path d="M19 4l3 1.5-1 3-3-1z" fill="#6a9ad8"/>
    </svg>
    <div class="a" style="left:0;top:125px;width:137px;height:20px;background:#cfcfcf;border-top:1px solid #c2c2c2"></div>
    <svg class="a" style="left:7px;top:131.5px" width="9" height="9"><circle cx="4.5" cy="4.5" r="3.4" fill="#111"/><path d="M4.5 4v3" stroke="#fff" stroke-width="1.1"/><circle cx="4.5" cy="2.6" r="0.6" fill="#fff"/></svg>
    <div class="a" style="left:63.5px;top:131px;width:32px;height:9.5px;background:#ebebeb;border:0.5px solid #c4c4c4;border-radius:1px"></div>
    <div class="t" style="left:63.5px;top:133px;width:32px;text-align:center;font-size:6.8px;color:#555">OK</div>
    <div class="a" style="left:100px;top:131px;width:32.5px;height:9.5px;background:#ebebeb;border:0.5px solid #c4c4c4;border-radius:1px"></div>
    <div class="t" style="left:100px;top:133px;width:32.5px;text-align:center;font-size:6.8px;color:#444">Cancel</div>
  </div>
  <div class="a" style="left:798px;top:44px;width:1px;height:387px;background:#fafafa"></div>
</div>
</body></html>
